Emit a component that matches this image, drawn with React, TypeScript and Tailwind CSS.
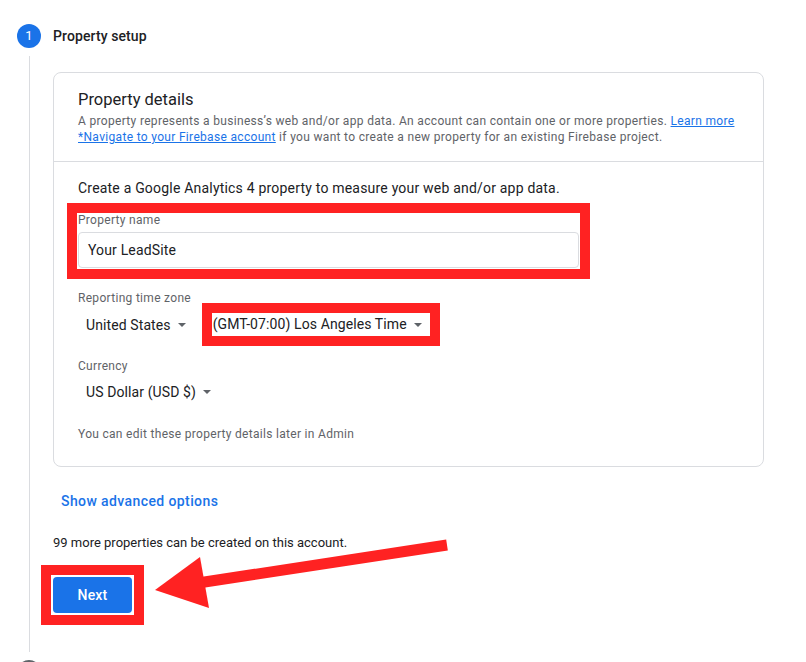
import React from "react";

function Caret() {
  return (
    <svg width="8" height="4" viewBox="0 0 8 4" className="ml-[7px] shrink-0">
      <polygon points="0,0 8,0 4,4" fill="#5f6368" />
    </svg>
  );
}

export default function App() {
  return (
    <div
      className="relative w-[806px] h-[662px] overflow-hidden bg-white text-[#202124]"
      style={{ fontFamily: "Roboto, 'Liberation Sans', Arial, sans-serif" }}
    >
      {/* step header */}
      <div className="flex items-center gap-3 pl-[17px] pt-[24px]">
        <div className="flex h-6 w-6 items-center justify-center rounded-full bg-[#1a73e8] text-[13px] text-white">
          1
        </div>
        <div className="text-[14px] font-medium leading-6 tracking-[0.1px]">Property setup</div>
      </div>

      <div className="mt-[8px] flex pl-[29px]">
        <div className="h-[596px] w-px shrink-0 bg-[#dadce0]" />

        <div className="ml-[23px] flex flex-col">
          {/* card */}
          <div className="mt-[16px] w-[711px] rounded-lg border border-[#dadce0]">
            <div className="border-b border-[#dadce0] px-6 pb-[16px] pt-[15px]">
              <div className="text-[16.5px] leading-6 text-[#202124]">Property details</div>
              <p className="mt-px text-[12px] leading-4 tracking-[0.32px] text-[#5f6368]">
                A property represents a business’s web and/or app data. An account can contain one or more properties.{" "}
                <span className="text-[#1a73e8] underline">Learn more</span>
                <br />
                <span className="text-[#1a73e8] underline">*Navigate to your Firebase account</span> if you want to create a
                new property for an existing Firebase project.
              </p>
            </div>

            <div className="px-6 pb-6 pt-4">
              <div className="text-[14px] leading-5 tracking-[0.2px]">
                Create a Google Analytics 4 property to measure your web and/or app data.
              </div>

              <div className="ml-[-11px] mt-[5px] w-[523px] border-[10px] border-[#ff2222] px-px pb-px">
                <div className="text-[12px] leading-[14px] tracking-[0.3px] text-[#5f6368]">Property name</div>
                <div className="mt-[5px] flex h-9 items-center rounded border border-[#dadce0] px-[9px] text-[14px] tracking-[0.15px]">
                  Your LeadSite
                </div>
              </div>

              <div className="mt-[12px] text-[12px] leading-[14px] tracking-[0.3px] text-[#5f6368]">
                Reporting time zone
              </div>
              <div className="mt-[-2px] flex items-center">
                <div className="ml-2 flex items-center text-[14px] leading-5 tracking-[0.1px]">
                  United States
                  <Caret />
                </div>
                <div className="ml-[16px] flex h-[43px] items-center border-[10px] border-[#ff2222] pl-px pr-[8px] text-[14px] tracking-[0.1px]">
                  (GMT-07:00) Los Angeles Time
                  <Caret />
                </div>
              </div>

              <div className="mt-[12px] text-[12px] leading-4 tracking-[0.3px] text-[#5f6368]">Currency</div>
              <div className="ml-2 mt-[8px] flex items-center text-[14px] leading-5 tracking-[0.1px]">
                US Dollar (USD $)
                <Caret />
              </div>

              <div className="mt-6 text-[12px] leading-4 tracking-[0.3px] text-[#5f6368]">
                You can edit these property details later in Admin
              </div>
            </div>
          </div>

          <div className="ml-2 mt-6 text-[14px] font-medium leading-5 tracking-[0.4px] text-[#1a73e8]">
            Show advanced options
          </div>

          <div className="mt-[23px] text-[13px] leading-[18px]">99 more properties can be created on this account.</div>

          <div className="ml-[-12px] mt-[13px] w-[103px] border-[10px] border-[#ff2222] p-[2px]">
            <div className="flex h-9 w-[79px] items-center justify-center rounded bg-[#1a73e8] text-[14px] font-medium tracking-[0.2px] text-white">
              Next
            </div>
          </div>
        </div>
      </div>

      {/* next step circle peeking at the bottom */}
      <div className="absolute left-[17px] top-[660px] h-6 w-6 rounded-full bg-[#5f6368]" />

      {/* annotation arrow */}
      <svg className="pointer-events-none absolute left-0 top-0" width="806" height="662">
        <line x1="447" y1="545" x2="198" y2="583" stroke="#ff2222" strokeWidth="11" />
        <polygon points="155,590 200,557 209,608" fill="#ff2222" />
      </svg>
    </div>
  );
}
